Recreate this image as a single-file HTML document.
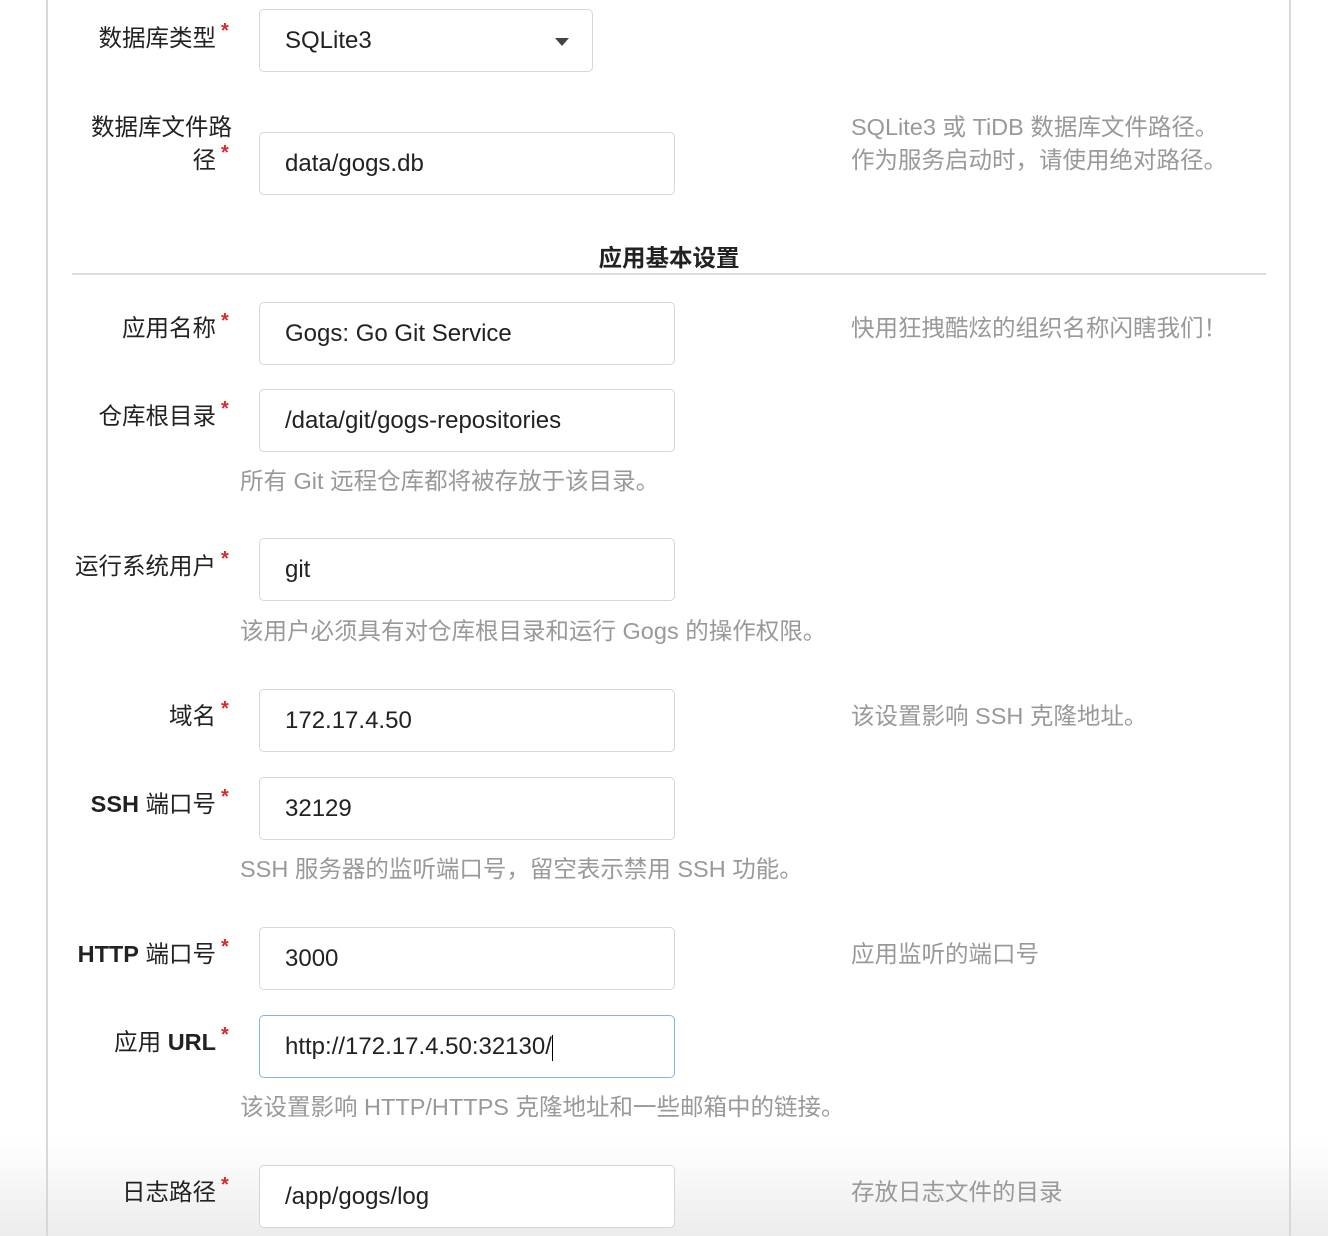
<!DOCTYPE html>
<html><head><meta charset="utf-8"><style>
body{margin:0;width:1328px;height:1236px;overflow:hidden;background:#fff;font-family:"Liberation Sans","Noto Sans CJK SC",sans-serif;position:relative}
.bg{position:absolute;left:0;top:1140px;width:1328px;height:96px;background:linear-gradient(#fff,#ececec)}
.vl{position:absolute;top:0;width:2px;height:1236px;background:#d8d8d8}
.lab{position:absolute;right:1112px;font-size:23.5px;color:#222;text-align:right;line-height:33px;white-space:nowrap}
.lab b{font-weight:bold}
.st{position:absolute;left:221px;color:#db2828;font-size:20px;font-weight:bold}
.in{position:absolute;left:259px;border:1px solid #d6d6d6;border-radius:5px;background:#fff;font-size:24px;color:#222;line-height:61px;padding-left:25px;box-sizing:border-box;width:416px;height:63px}
.hb{position:absolute;left:240px;font-size:23.5px;color:#999;line-height:30px;white-space:nowrap}
.hr{position:absolute;left:851px;font-size:23.5px;color:#999;line-height:33px;white-space:nowrap}
</style></head><body>
<div class="bg"></div>
<div class="vl" style="left:46px"></div>
<div class="vl" style="left:1289px"></div>

<div class="lab" style="top:22px">数据库类型</div><div class="st" style="top:20px">*</div>
<div class="in" style="top:9px;width:334px">SQLite3<span style="position:absolute;left:295px;top:28px;width:0;height:0;border-left:7px solid transparent;border-right:7px solid transparent;border-top:8px solid #444"></span></div>

<div class="lab" style="top:111px;right:1096px">数据库文件路</div>
<div class="lab" style="top:144px">径</div><div class="st" style="top:142px">*</div>
<div class="in" style="top:132px">data/gogs.db</div>
<div class="hr" style="top:111px">SQLite3 或 TiDB 数据库文件路径。<br>作为服务启动时，请使用绝对路径。</div>

<div style="position:absolute;left:0;width:1338px;top:239px;text-align:center;font-size:23.5px;font-weight:bold;color:#222">应用基本设置</div>
<div style="position:absolute;left:72px;top:273px;width:1194px;height:2px;background:#dcdcdc"></div>

<div class="lab" style="top:312px">应用名称</div><div class="st" style="top:310px">*</div>
<div class="in" style="top:302px">Gogs: Go Git Service</div>
<div class="hr" style="top:312px">快用狂拽酷炫的组织名称闪瞎我们！</div>

<div class="lab" style="top:400px">仓库根目录</div><div class="st" style="top:398px">*</div>
<div class="in" style="top:389px">/data/git/gogs-repositories</div>
<div class="hb" style="top:466px">所有 Git 远程仓库都将被存放于该目录。</div>

<div class="lab" style="top:550px">运行系统用户</div><div class="st" style="top:548px">*</div>
<div class="in" style="top:538px">git</div>
<div class="hb" style="top:616px">该用户必须具有对仓库根目录和运行 Gogs 的操作权限。</div>

<div class="lab" style="top:700px">域名</div><div class="st" style="top:698px">*</div>
<div class="in" style="top:689px">172.17.4.50</div>
<div class="hr" style="top:700px">该设置影响 SSH 克隆地址。</div>

<div class="lab" style="top:788px"><b>SSH</b> 端口号</div><div class="st" style="top:786px">*</div>
<div class="in" style="top:777px">32129</div>
<div class="hb" style="top:854px">SSH 服务器的监听端口号，留空表示禁用 SSH 功能。</div>

<div class="lab" style="top:938px"><b>HTTP</b> 端口号</div><div class="st" style="top:936px">*</div>
<div class="in" style="top:927px">3000</div>
<div class="hr" style="top:938px">应用监听的端口号</div>

<div class="lab" style="top:1026px">应用 <b>URL</b></div><div class="st" style="top:1024px">*</div>
<div class="in" style="top:1015px;border-color:#85b7d9">http://172.17.4.50:32130/<span style="display:inline-block;width:1px;height:26px;background:#000;vertical-align:middle"></span></div>
<div class="hb" style="top:1092px">该设置影响 HTTP/HTTPS 克隆地址和一些邮箱中的链接。</div>

<div class="lab" style="top:1176px">日志路径</div><div class="st" style="top:1174px">*</div>
<div class="in" style="top:1165px">/app/gogs/log</div>
<div class="hr" style="top:1176px">存放日志文件的目录</div>
</body></html>
